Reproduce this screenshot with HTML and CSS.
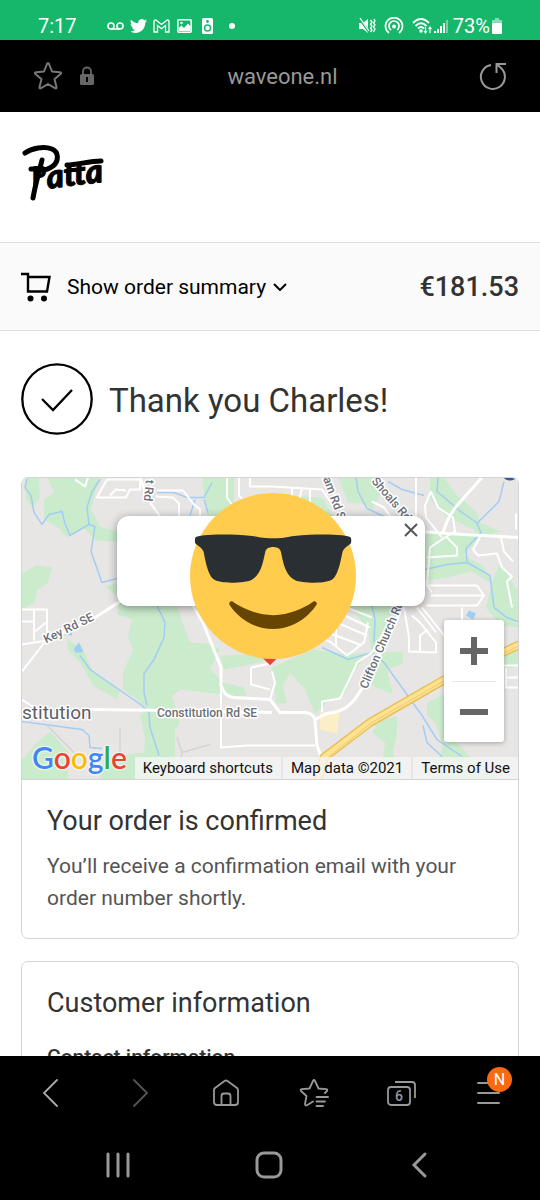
FILE: index.html
```html
<!DOCTYPE html>
<html lang="en">
<head>
  <meta charset="UTF-8" />
  <meta name="viewport" content="width=device-width, initial-scale=1" />
  <title>Thank you Charles! - Patta</title>
  <link rel="stylesheet" href="styles.css">
</head>
<body>

<div class="status-bar">
  <span class="clock">7:17</span>
  <div class="status-icons">
    <svg width="17" height="16" viewBox="0 0 17 16" fill="none" stroke="#fff" stroke-width="1.6"><circle cx="4" cy="8" r="3" /><circle cx="13" cy="8" r="3" /><path d="M4 11h9" /></svg>
    <svg width="17" height="16" viewBox="0 2 24 20" fill="#fff"><path d="M23.950 4.570a10 10 0 0 1-2.820.770 4.960 4.960 0 0 0 2.160-2.720c-.950.550-2 .950-3.130 1.180a4.920 4.920 0 0 0-8.380 4.480C7.690 8.090 4.070 6.130 1.640 3.160a4.930 4.930 0 0 0 1.520 6.570 4.900 4.900 0 0 1-2.230-.610v.060a4.920 4.920 0 0 0 3.950 4.830 5 5 0 0 1-2.210.080 4.940 4.940 0 0 0 4.600 3.420A9.870 9.870 0 0 1 0 19.540a14 14 0 0 0 7.550 2.210c9.050 0 14-7.500 14-13.980l-.020-.630a9.940 9.940 0 0 0 2.460-2.550z" /></svg>
    <svg width="17" height="16" viewBox="0 0 17 16" fill="none" stroke="#fff" stroke-width="1.300"><path d="M1 14V3.500C1 2 2.500 1.500 3.500 2.500l5 4 5-4C14.500 1.500 16 2 16 3.500V14h-3.500V7.500l-4 3.200-4-3.200V14z" /></svg>
    <svg width="17" height="16" viewBox="0 0 17 16"><rect x="1.800" y="1.800" width="13.400" height="12.400" rx="1" fill="none" stroke="#fff" stroke-width="1.600" /><path d="M3 12V9.500l2.500-2 2.500 2.500 4-4.500 2.500 3V13H3z" fill="#fff" /><circle cx="5.500" cy="5" r="1.200" fill="#fff" /></svg>
    <svg width="17" height="16" viewBox="0 0 17 16"><rect x="3" y="0" width="11" height="16" rx="1.500" fill="#fff" /><circle cx="8.500" cy="10" r="3" fill="none" stroke="#17b76b" stroke-width="1.500" /><circle cx="8.500" cy="3.500" r="1.400" fill="#17b76b" /></svg>
    <span class="dot"></span>
  </div>
  <div class="status-right">
    <svg width="18" height="18" viewBox="0 0 18 18"><path d="M1 6h4l5-4v14l-5-4H1z" fill="#fff" /><path d="M1 1l11 15" stroke="#17b76b" stroke-width="2.500" /><path d="M2 1l9 13M12.500 3l1.500 2-1.500 2 1.500 2-1.500 2 1.500 2-1.500 2M16 2l1 2-1.500 2 1.500 2-1.500 2 1.500 2-1.500 3" fill="none" stroke="#fff" stroke-width="1.300" /></svg>
    <svg width="20" height="18" viewBox="0 0 20 18" fill="none" stroke="#fff" stroke-width="1.700"><path d="M5 16a8.500 8.500 0 1 1 10 0M7 13a5 5 0 1 1 6 0" /><circle cx="10" cy="9.500" r="2" fill="#fff" stroke="none" /></svg>
    <svg width="20" height="18" viewBox="0 0 20 18" fill="none" stroke="#fff" stroke-width="1.900"><path d="M1 6q8-8 16 0M3.500 9q5.500-5.500 11 0M6 11.500q3-3 6 0" /><circle cx="9" cy="14" r="1.700" fill="#fff" stroke="none" /><path d="M13.500 10v5.500M12 14l1.500 2L15 14M18 16v-5.500M16.500 12l1.500-2 1.500 2" stroke-width="1.200" /></svg>
    <svg width="14" height="18" viewBox="0 0 14 18" fill="#fff"><path d="M0 14h2v2H0zM3 12h2v4H3zM6 9h2v7H6zM9 6h2v10H9z" /><path d="M12 3h2v13h-2z" opacity=".4" /></svg>
    <span>73%</span>
    <svg width="10" height="18" viewBox="0 0 10 18" fill="#fff"><path d="M3 1h4v2h3v4H0V3h3z" opacity=".5" /><rect y="6" width="10" height="11" rx="1" /></svg>
  </div>
</div>

<div class="address-bar">
  <button class="bar-btn" aria-label="Bookmark">
    <svg width="30" height="30" viewBox="0 0 30 30" fill="none" stroke="#777" stroke-width="2" stroke-linejoin="round"><path d="M14 3q1-2 2 0l3 7.500 8 .700q2 .300.500 1.800l-6 5.300 2 7.700q.200 2-1.500 1.200L15 23l-7 4.200q-1.700.800-1.500-1.200l2-7.700-6-5.300Q1 11.500 3 11.200l8-.700z" /></svg>
  </button>
  <svg class="lock" width="14" height="20" viewBox="0 0 14 20"><path d="M3 9V5.500a4 4 0 0 1 8 0V9" fill="none" stroke="#666" stroke-width="1.800" /><rect y="8" width="14" height="11" rx="1.500" fill="#666" /><path d="M7 11v5" stroke="#000" stroke-width="2" /></svg>
  <span class="url">waveone.nl</span>
  <button class="bar-btn" aria-label="Reload">
    <svg width="28" height="28" viewBox="0 0 28 28" fill="none" stroke="#999" stroke-width="2"><path d="M12 3A12 12 0 1 0 22 6L18 2.500M27 2h-9.500v9" /></svg>
  </button>
</div>

<main class="page">
  <header class="shop-header">
    <a href="#" class="logo" aria-label="Patta">
      <svg width="84" height="60" viewBox="0 0 84 60">
        <g transform="rotate(-7 40 30)">
          <text class="logo-p" x="11" y="37">P</text>
          <text class="logo-rest" x="25" y="43">atta</text>
        </g>
        <path d="M4 9C11 4 23 2 31 5c7 3 7 12 1 17-4 3-8 4-12 4M21 16c-3 12-7 26-9 38M10 25h6M46 21c10 0 22-4 34-4" fill="none" stroke="#000" stroke-width="5" stroke-linecap="round" />
      </svg>
    </a>
  </header>

  <div class="summary-bar">
    <button class="summary-toggle">
      <svg width="30" height="30" viewBox="0 0 30 30"><path d="M0 2h7v17.500h19L28.500 5H8" fill="none" stroke="#000" stroke-width="2.400" /><circle cx="9.500" cy="26.500" r="3" /><circle cx="23" cy="26.500" r="3" /></svg>
      <span>Show order summary</span>
      <svg class="chevron" width="14" height="8" viewBox="0 0 14 8" fill="none" stroke="#000" stroke-width="2"><path d="M1 1l6 6 6-6" /></svg>
    </button>
    <strong class="total">€181.53</strong>
  </div>

  <section class="content">
    <div class="thanks">
      <svg width="72" height="72" viewBox="0 0 72 72" fill="none" stroke="#000" stroke-width="2.300"><circle cx="36" cy="36" r="34.700" /><path d="M21 36l11 11 19-20" /></svg>
      <h1>Thank you Charles!</h1>
    </div>

    <div class="card">
      <div class="map">
        <svg class="map-tiles" viewBox="0 0 496 302" preserveAspectRatio="xMidYMid slice">
          <rect width="496" height="302" fill="#e8e6e5" />
          <!-- parks -->
          <g fill="#cbebcd">
            <path d="M3 0H17L18 20 10 31 4 20z" />
            <path d="M25 0H80L74 12 69 32 78 49 95 54V64L74 63 61 50 45 60 38 52 22 42V22L32 15z" />
            <path d="M0 96L14 88 30 90 26 105 15 113 13 125 0 132z" />
            <path d="M180 0H212V40L185 38z" />
            <path d="M82 109L95 106 140 128H155L160 144 168 165 185 166 198 172 188 192 201 205 222 210 225 220 158 212 150 219 158 245 153 252V302H78L82 280 122 275 123 262 118 237 126 232 115 222 101 212V195L111 172 106 158 110 142 95 137 98 120z" />
            <path d="M45 162L61 172 70 192 98 214 95 222 71 208 58 185 46 172z" />
            <path d="M28 254L46 274V302H0V282L15 265z" />
            <path d="M198 178L228 177 248 182 228 187 202 192z" />
            <path d="M250 190L291 172 325 177 345 175 332 195 322 218 305 225 293 236 283 212 268 195 261 209 265 226 254 226z" />
            <path d="M358 175L381 174V186L365 192 371 217 350 208z" />
            <path d="M358 242L375 239V255L371 275 376 302H358L363 265 350 255z" />
            <path d="M405 225L425 215V255L448 279 480 302H411L421 268 413 245 405 238z" />
            <path d="M481 178L496 172V189L481 192z" />
            <path d="M316 0H351L358 18 350 32 340 26 326 25zM268 18L300 20 312 40H260z" />
            <path d="M408 0H422L435 18 455 35 458 45 478 54 458 62 452 52 425 40 408 22z" />
            <path d="M400 55H461L442 78 461 88 472 108 450 94 425 100 400 104z" />
            <path d="M478 85L493 109 496 112V150L478 148 464 130 470 105z" />
            <path d="M325 128H372L364 155 350 178 346 150z" />
          </g>
          <path d="M298 236L318 231 315 256 298 252z" fill="#fcefc7" />
          <!-- water -->
          <g fill="none" stroke="#a3cdf3" stroke-width="1.500">
            <path d="M5 1L3 10 9 18 12 35 20 47 27 37 40 34 43 46 48 58 67 47 65 30 70 14 78 2M67 47L73 49 69 74 80 105 95 101" />
            <path d="M135 15L152 15 165 20 182 20 190 5M173 22L168 38M182 22L186 35M135 128L143 145 142 160 132 182 122 196 122 215 125 228M58 178L68 192 120 228 127 235 128 250 137 278" />
            <path d="M0 244L30 248 60 252 67 258 68 270 80 271M334 0L336 14 345 31 360 38 372 44M366 4L380 12 402 18" />
            <path d="M482 4L477 24 455 46 459 55 444 71 445 85 468 98 472 130 485 140 496 144M416 0L415 14 440 35 456 46M403 92L425 87 445 85M350 128L353 142 352 165M300 170L326 182 350 175 362 185 400 238 415 262 440 279M401 248L405 265 420 279" />
          </g>
          <path d="M57 165l4 8-1 2h-7l-1-4zM447 133l7 3-3 6-7-4zM42 157l8-2v3z" fill="#9fcdf5" />
          <path d="M482 0h12a6 3 0 0 1-12 0z" fill="#3c5a96" />
          <!-- streets -->
          <g fill="none" stroke="#fff" stroke-width="2" stroke-linejoin="round">
            <path d="M75 20L85 2H118V12L108 12 104 20zM88 18L94 12 104 13M53 2L63 9 66 0" />
            <path d="M126 22L138 39M134 19L151 20 157 26V42M135 13H161L171 26 178 32V42M205 0V20L212 30M217 0V18L226 28M228 0V9H250M250 9L300 12 308 24 320 26M270 9V20M280 10L276 30M288 12V30" />
            <path d="M0 132H25V163L0 167M12 132V163M0 144H12M24 145L12 155M24 163L0 194M0 222L12 230" />
            <path d="M199 210V270L225 268 260 268 293 268M229 190L248 186M229 190V207L248 212M250 194L253 205 248 222" />
            <path d="M300 235V224L318 221 333 190 335 185 350 175 370 140M290 158L308 164 325 178 342 165 346 145M303 140L345 158M310 132L348 150M320 128L350 140M314 145V168M298 152L340 168" />
            <path d="M394 0V40M409 14L403 28 404 40 420 60M409 14L416 30 431 40 433 54 423 60 408 70 405 108 410 115M405 80L435 78 435 70 425 60M404 108H455L462 118 455 128H404M409 118H461" />
            <path d="M459 58L451 72 456 78 475 76 480 90 490 99 485 104 490 130M479 60L482 74 491 84M494 36V52" />
            <path d="M382 130L387 160V174L414 175 414 165 398 145 390 138M395 130L414 155M398 174V158L406 152M400 130L430 168M481 188H496M484 190V210H496M484 200H496" />
            <path d="M350 24L362 30 376 50M300 0L318 25M440 130V143" />
          </g>
          <g fill="none" stroke="#fff" stroke-width="3" stroke-linejoin="round">
            <path d="M98 124L70 142 24 163M68 232L155 233 250 235M171 128L181 145 199 190V208Q202 219 212 220L248 222 258 235H283Q293 236 293 244L295 268 300 282" />
            <path d="M293 242L305 236 Q325 235 336 217L345 203 375 142 382 122M400 54L425 56 496 60M421 56Q424 42 435 28L460 0M118 0L126 22" />
          </g>
          <path d="M98 250V285M25 248L52 275M155 260L160 275 158 285M160 275L188 267" fill="none" stroke="#d5d4d3" stroke-width="1.500" />
          <!-- highway -->
          <path d="M296 302L302 280 348 245 421 203 500 166" fill="none" stroke="#e9bf5c" stroke-width="9" />
          <path d="M296 302L302 280 348 245 421 203 500 166" fill="none" stroke="#fde391" stroke-width="6" />
          <path d="M306 280L350 245 421 204 500 167" fill="none" stroke="#efca6d" stroke-width="1" />
          <!-- labels -->
          <g class="map-labels">
            <text transform="translate(124 2) rotate(96)">t Rd</text>
            <text transform="translate(301 1) rotate(70)">am Rd SE</text>
            <text transform="translate(349 4) rotate(49)">Shoals Rd</text>
            <text transform="translate(24 166) rotate(-26)">Key Rd SE</text>
            <text transform="translate(345 212) rotate(-67)">Clifton Church Rd</text>
            <text x="135" y="239">Constitution Rd SE</text>
            <text class="town" x="0" y="241">stitution</text>
          </g>
        </svg>

        <div class="pin"></div>
        <div class="popup">
          <button class="popup-close" aria-label="Close">
            <svg width="14" height="14" viewBox="0 0 14 14" stroke="#555" stroke-width="2"><path d="M1 1l12 12M13 1L1 13" /></svg>
          </button>
        </div>
        <svg class="emoji" viewBox="0 0 36 36">
          <circle cx="18" cy="18" r="18" fill="#ffcc4d" />
          <path fill="#292f33" d="M1.240 11.018c.240.239 1.438.957 1.677 1.675.240.717.720 4.784 2.158 5.981 1.483 1.232 7.077.774 8.148.240 2.397-1.195 2.691-4.531 3.115-6.221.239-.957 1.677-.957 1.677-.957s1.438 0 1.678.956c.424 1.691.720 5.027 3.115 6.221 1.072.535 6.666.994 8.151-.238 1.436-1.197 1.915-5.264 2.155-5.982.238-.717 1.438-1.435 1.677-1.674.241-.239.241-1.196 0-1.436-.479-.478-6.134-.904-12.223-.239-1.215.133-1.677.478-4.554.478-2.875 0-3.339-.346-4.553-.478-6.085-.666-11.741-.240-12.221.239-.239.239-.239 1.197 0 1.435z" />
          <path fill="#664500" d="M27.335 23.629c-.178-.161-.444-.171-.635-.029-.039.029-3.922 2.900-8.700 2.900-4.766 0-8.662-2.871-8.700-2.900-.191-.142-.457-.130-.635.029-.177.160-.217.424-.094.628C8.700 24.472 11.788 29.500 18 29.500s9.301-5.028 9.429-5.243c.123-.205.084-.468-.094-.628z" />
        </svg>

        <div class="zoom">
          <button aria-label="Zoom in"><svg width="28" height="28" viewBox="0 0 28 28" stroke="#666" stroke-width="6"><path d="M14 0v28M0 14h28" /></svg></button>
          <button aria-label="Zoom out"><svg width="28" height="28" viewBox="0 0 28 28" stroke="#666" stroke-width="6"><path d="M0 14h28" /></svg></button>
        </div>

        <a href="#" class="google"><span class="blue">G</span><span class="red">o</span><span class="yellow">o</span><span class="blue">g</span><span class="green">l</span><span class="red">e</span></a>
        <div class="map-footer">
          <button>Keyboard shortcuts</button>
          <span>Map data ©2021</span>
          <a href="#">Terms of Use</a>
        </div>
      </div>
      <div class="card-body">
        <h2>Your order is confirmed</h2>
        <p>You’ll receive a confirmation email with your order number shortly.</p>
      </div>
    </div>

    <div class="card">
      <div class="card-body">
        <h2>Customer information</h2>
        <h3>Contact information</h3>
      </div>
    </div>
  </section>
</main>

<nav class="browser-nav">
  <button aria-label="Back"><svg width="28" height="30" viewBox="0 0 28 30" fill="none" stroke="#aaa" stroke-width="1.800" stroke-linecap="round"><path d="M21 2L8 15l13 13" /></svg></button>
  <button aria-label="Forward"><svg width="28" height="30" viewBox="0 0 28 30" fill="none" stroke="#555" stroke-width="1.800" stroke-linecap="round"><path d="M10 2l13 13-13 13" /></svg></button>
  <button aria-label="Home"><svg width="28" height="30" viewBox="0 0 28 30" fill="none" stroke="#999" stroke-width="1.800" stroke-linejoin="round"><path d="M2 12q0-1 1-2L12.500 3q1.500-1 3 0L25 10q1 1 1 2v12q0 3-3 3H5q-3 0-3-3zM9.500 27V18q0-2.500 2.500-2.500h4q2.500 0 2.500 2.500v9" /></svg></button>
  <button aria-label="Bookmarks"><svg width="30" height="30" viewBox="0 0 30 30" fill="none" stroke="#999" stroke-width="1.800" stroke-linejoin="round" stroke-linecap="round"><path d="M26 15l2-2q1-1.500-1-1.800l-7.500-.700L16 3q-1-2-2 0l-3.500 7.500-7.500.700q-2 .300-1 1.800l5.500 5L6 26q0 2 2 1.200l6-3.700" /><path d="M17.500 19H29M17.500 23.500H26M17.500 28H24" /></svg></button>
  <button aria-label="Tabs"><svg width="30" height="30" viewBox="0 0 30 30" fill="none" stroke="#999" stroke-width="1.800"><rect x="1" y="9" width="22" height="18" rx="3" /><path d="M8 4h17q3 0 3 3v13" /></svg><span class="tab-count">6</span></button>
  <button aria-label="Menu"><svg width="26" height="30" viewBox="0 0 26 30" stroke="#999" stroke-width="2" stroke-linecap="round"><path d="M1 5h21M1 15h21M1 25h21" /></svg><span class="badge">N</span></button>
</nav>

<nav class="system-nav">
  <button aria-label="Recents"><svg width="26" height="28" viewBox="0 0 26 28" stroke="#999" stroke-width="3" stroke-linecap="round"><path d="M3 3v22M13 3v22M23 3v22" /></svg></button>
  <button aria-label="Home screen"><svg width="28" height="28" viewBox="0 0 28 28" fill="none" stroke="#999" stroke-width="3"><rect x="2" y="2" width="24" height="24" rx="7" /></svg></button>
  <button aria-label="Go back"><svg width="28" height="28" viewBox="0 0 28 28" fill="none" stroke="#999" stroke-width="3" stroke-linecap="round"><path d="M19 3L8 14l11 11" /></svg></button>
</nav>

</body>
</html>
```

FILE: styles.css
```css
* {
  box-sizing: border-box;
}

body {
  margin: 0;
  height: 100vh;
  display: flex;
  flex-direction: column;
  overflow: hidden;
  background: #fff;
  color: #333;
  font-family: Roboto, "Liberation Sans", sans-serif;
}

button {
  border: none;
  background: none;
  padding: 0;
  margin: 0;
  font: inherit;
  color: inherit;
  cursor: pointer;
}

a {
  color: inherit;
  text-decoration: none;
}

svg {
  display: block;
}

/* phone status bar */
.status-bar {
  flex: none;
  display: flex;
  align-items: center;
  height: 40px;
  padding: 12px 38px 0;
  background: #17b76b;
  color: #fff;
  font-size: 20px;
}

.status-icons {
  display: flex;
  align-items: center;
  gap: 6px;
  margin-left: 30px;
}

.dot {
  width: 6px;
  height: 6px;
  margin-left: 7px;
  border-radius: 50%;
  background: #fff;
}

.status-right {
  display: flex;
  align-items: center;
  gap: 2px;
  margin-left: auto;
}

.status-right svg:nth-child(-n+2) {
  margin-right: 6px;
}

.status-right span {
  margin-left: 3px;
}

/* address bar */
.address-bar {
  flex: none;
  display: flex;
  align-items: center;
  height: 72px;
  padding: 0 33px;
  background: #000;
  color: #999;
  font-size: 22px;
}

.lock {
  margin-left: 17px;
}

.url {
  flex: 1;
  padding-right: 8px;
  text-align: center;
}

/* shop page */
.page {
  flex: 1;
  min-height: 0;
  overflow: hidden;
}

.shop-header {
  height: 130px;
  padding: 32px 21px;
}

.logo {
  display: inline-block;
}

.logo-p,
.logo-rest {
  font-family: Lato, sans-serif;
  font-weight: 900;
  font-style: italic;
  stroke: #000;
  stroke-width: 1px;
  stroke-linejoin: round;
}

.logo-p {
  font-size: 24px;
}

.logo-rest {
  font-size: 33px;
}

.summary-bar {
  display: flex;
  align-items: center;
  justify-content: space-between;
  height: 89px;
  padding: 0 21px;
  background: #fafafa;
  border-top: 1px solid #dedede;
  border-bottom: 1px solid #dedede;
}

.summary-toggle {
  display: flex;
  align-items: center;
  color: #000;
  font-size: 21px;
}

.summary-toggle span {
  margin-left: 16px;
}

.chevron {
  margin-left: 7px;
}

.total {
  font-size: 27px;
  font-weight: 500;
}

.content {
  display: flex;
  flex-direction: column;
  padding: 32px 21px;
}

.thanks {
  display: flex;
  align-items: center;
  gap: 16px;
  margin-bottom: 42px;
}

h1,
h2,
h3,
p {
  margin: 0;
}

h1 {
  padding-top: 3px;
  font-size: 33px;
  font-weight: 400;
  line-height: 40px;
}

h2 {
  font-size: 27px;
  font-weight: 400;
  line-height: 32px;
}

h3 {
  margin-top: 26px;
  font-size: 21px;
  font-weight: 500;
  line-height: 24px;
}

.card {
  margin-bottom: 22px;
  border: 1px solid #d4d4d4;
  border-radius: 7px;
  overflow: hidden;
}

.card-body {
  padding: 25px 25px 24px;
}

.card-body p {
  margin-top: 13px;
  color: #545454;
  font-size: 21px;
  line-height: 32px;
}

/* map */
.map {
  position: relative;
  height: 302px;
  overflow: hidden;
  border-bottom: 1px solid #d4d4d4;
}

.map-tiles {
  width: 100%;
  height: 100%;
}

.map-labels {
  fill: #6b7078;
  stroke: #fff;
  stroke-width: 3px;
  stroke-linejoin: round;
  paint-order: stroke;
  font-size: 12px;
  font-weight: 500;
}

.town {
  fill: #5a5f66;
  font-size: 19px;
  font-weight: 400;
}

.popup {
  position: absolute;
  top: 38px;
  left: 50%;
  width: 308px;
  height: 90px;
  margin-left: -153px;
  border-radius: 12px;
  background: #fff;
  box-shadow: 0 2px 10px rgba(0, 0, 0, 0.4);
}

.popup-close {
  position: absolute;
  top: 7px;
  right: 7px;
}

.emoji {
  position: absolute;
  top: 15px;
  left: 50%;
  width: 166px;
  margin-left: -80px;
}

.pin {
  position: absolute;
  top: 168px;
  left: 50%;
  width: 16px;
  height: 16px;
  transform: translateX(-50%) rotate(45deg);
  background: #ea4335;
}

.zoom {
  position: absolute;
  top: 142px;
  right: 14px;
  display: flex;
  flex-direction: column;
  width: 60px;
  padding: 0 8px;
  border-radius: 3px;
  background: #fff;
  box-shadow: 0 1px 5px rgba(0, 0, 0, 0.3);
}

.zoom button {
  display: flex;
  align-items: center;
  justify-content: center;
  height: 61px;
}

.zoom button + button {
  border-top: 1px solid #e6e6e6;
}

.google {
  position: absolute;
  bottom: 3px;
  left: 10px;
  font-family: Lato, sans-serif;
  font-size: 30px;
  font-weight: 600;
  line-height: 38px;
  text-shadow: 0 0 2px #fff, 0 0 2px #fff, 0 0 3px #fff;
}

.blue {
  color: #4285f4;
}

.red {
  color: #ea4335;
}

.yellow {
  color: #fbbc05;
}

.green {
  color: #34a853;
}

.map-footer {
  position: absolute;
  right: 0;
  bottom: 0;
  display: flex;
  gap: 2px;
  color: #111;
  font-size: 15px;
  line-height: 22px;
}

.map-footer > * {
  padding: 0 8px;
  background: rgba(245, 245, 245, 0.8);
}

/* bottom bars */
.browser-nav,
.system-nav {
  flex: none;
  display: grid;
  background: #000;
}

.browser-nav {
  grid-template-columns: repeat(6, 1fr);
  height: 74px;
  padding: 0 6px;
}

.system-nav {
  grid-template-columns: repeat(3, 1fr);
  height: 70px;
  padding: 0 45px 0 42px;
}

.browser-nav button,
.system-nav button {
  position: relative;
  display: flex;
  align-items: center;
  justify-content: center;
}

.tab-count {
  position: absolute;
  top: 50%;
  left: 50%;
  width: 24px;
  margin: -5px 0 0 -15px;
  color: #999;
  font-size: 14px;
  font-weight: 500;
  line-height: 16px;
  text-align: center;
}

.badge {
  position: absolute;
  top: 11px;
  left: 41px;
  width: 25px;
  height: 25px;
  border-radius: 50%;
  background: #f96a10;
  color: #fff;
  font-size: 16px;
  line-height: 25px;
  text-align: center;
}
```
